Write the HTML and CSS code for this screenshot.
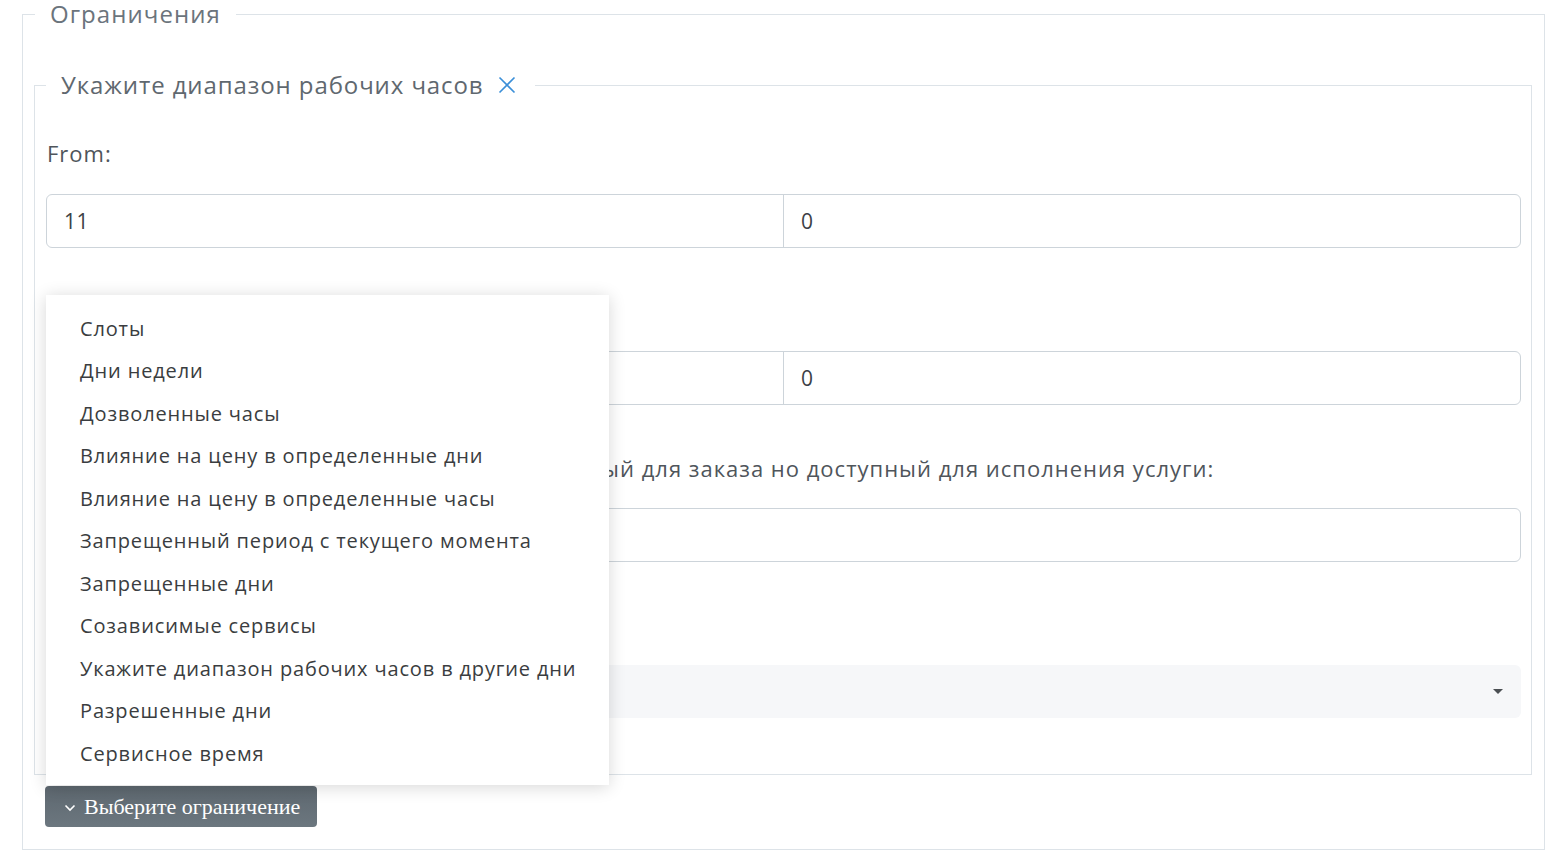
FILE: index.html
```html
<!DOCTYPE html>
<html lang="ru">
<head>
<meta charset="utf-8">
<title>Ограничения</title>
<link rel="stylesheet" href="styles.css">
</head>
<body>
<fieldset class="outer">
  <legend class="outer-legend">Ограничения</legend>
  <fieldset class="inner">
    <legend class="inner-legend">Укажите диапазон рабочих часов
      <span class="close-x"><svg width="18" height="18" viewBox="0 0 18 18"><path d="M1.5 1.5 L16.5 16.5 M16.5 1.5 L1.5 16.5" stroke="#3b8fd8" stroke-width="1.6" fill="none"/></svg></span>
    </legend>
    <div class="group">
      <div class="label">From:</div>
      <div class="input-group">
        <div class="input">11</div>
        <div class="input">0</div>
      </div>
    </div>
    <div class="group">
      <div class="label">To:</div>
      <div class="input-group">
        <div class="input">20</div>
        <div class="input">0</div>
      </div>
    </div>
    <div class="group">
      <div class="label">Интервал после текущего момента – недоступный для заказа но доступный для исполнения услуги:</div>
      <div class="input-group">
        <div class="input"></div>
      </div>
    </div>
    <div class="group">
      <div class="label">Тип:</div>
      <div class="select">
        <span class="caret"></span>
      </div>
    </div>
  </fieldset>
  <div class="dropup">
    <ul class="menu">
      <li>Слоты</li>
      <li>Дни недели</li>
      <li>Дозволенные часы</li>
      <li>Влияние на цену в определенные дни</li>
      <li>Влияние на цену в определенные часы</li>
      <li>Запрещенный период с текущего момента</li>
      <li>Запрещенные дни</li>
      <li>Созависимые сервисы</li>
      <li>Укажите диапазон рабочих часов в другие дни</li>
      <li>Разрешенные дни</li>
      <li>Сервисное время</li>
    </ul>
    <button class="btn" type="button">
      <svg class="chev" width="12" height="8" viewBox="0 0 12 8"><path d="M1.5 1.5 L6 6 L10.5 1.5" stroke="#fff" stroke-width="1.6" fill="none"/></svg>
      Выберите ограничение
    </button>
  </div>
</fieldset>
</body>
</html>
```

FILE: styles.css
```css
html, body {
  margin: 0;
  padding: 0;
  background: #fff;
}
body {
  font-family: "Open Sans", "Liberation Sans", sans-serif;
  color: #4a4f55;
  padding: 0 19px 0 22px;
}
.outer {
  margin: 0;
  border: 1px solid #dde3e8;
  padding: 43px 12px 22px 11px;
  min-width: 0;
}
.outer-legend {
  font-size: 24px;
  line-height: 28px;
  color: #6b747c;
  padding: 0 15px;
  margin-left: 1px;
  letter-spacing: 1.05px;
}
.inner {
  margin: 0;
  border: 1px solid #dde3e8;
  padding: 0 10px 56px 11px;
  min-width: 0;
}
.inner-legend {
  font-size: 24px;
  line-height: 28px;
  color: #5f686f;
  padding: 0 19px 0 15px;
  letter-spacing: 0.9px;
  display: flex;
  align-items: center;
}
.close-x {
  display: inline-flex;
  margin-left: 14px;
}
.group {
  margin-top: 48px;
}
.group:first-of-type {
  margin-top: 40px;
}
.label {
  font-size: 22px;
  line-height: 30px;
  margin-bottom: 25px;
  margin-left: 1px;
  color: #4f555b;
  letter-spacing: 1px;
  white-space: nowrap;
}
.group:first-of-type .label {
  margin-top: -1px;
  margin-bottom: 26px;
}
.input-group {
  display: flex;
  height: 54px;
  border: 1px solid #cdd4da;
  border-radius: 6px;
  box-sizing: border-box;
}
.input {
  flex: 1;
  padding-left: 17px;
  font-size: 21px;
  line-height: 52px;
  color: #3c4146;
  letter-spacing: 0.5px;
}
.input + .input {
  border-left: 1px solid #cdd4da;
}
.select {
  height: 53px;
  background: #f6f7f9;
  border-radius: 6px;
  display: flex;
  align-items: center;
  justify-content: flex-end;
  padding-right: 18px;
}
.caret {
  width: 0;
  height: 0;
  border-left: 5px solid transparent;
  border-right: 5px solid transparent;
  border-top: 5px solid #4b4f53;
}
.dropup {
  position: relative;
  margin-top: 11px;
  margin-left: 11px;
}
.menu {
  position: absolute;
  left: 1px;
  bottom: calc(100% + 1px);
  width: 563px;
  margin: 0;
  padding: 13px 0 10px;
  list-style: none;
  background: #fff;
  box-shadow: 0 2px 16px rgba(0, 0, 0, 0.16);
  z-index: 5;
}
.menu li {
  padding: 8px 0 8px 34px;
  font-size: 20px;
  line-height: 26.5px;
  color: #3a3d40;
  letter-spacing: 0.85px;
  white-space: nowrap;
}
.btn {
  display: inline-flex;
  align-items: center;
  height: 41px;
  padding: 0 17px 0 19px;
  border: none;
  border-radius: 4px;
  background: linear-gradient(#5d676f, #6c777f);
  color: #fff;
  font-family: "Liberation Serif", serif;
  font-size: 22px;
}
.chev {
  margin-right: 8px;
  margin-top: 2px;
}
```
